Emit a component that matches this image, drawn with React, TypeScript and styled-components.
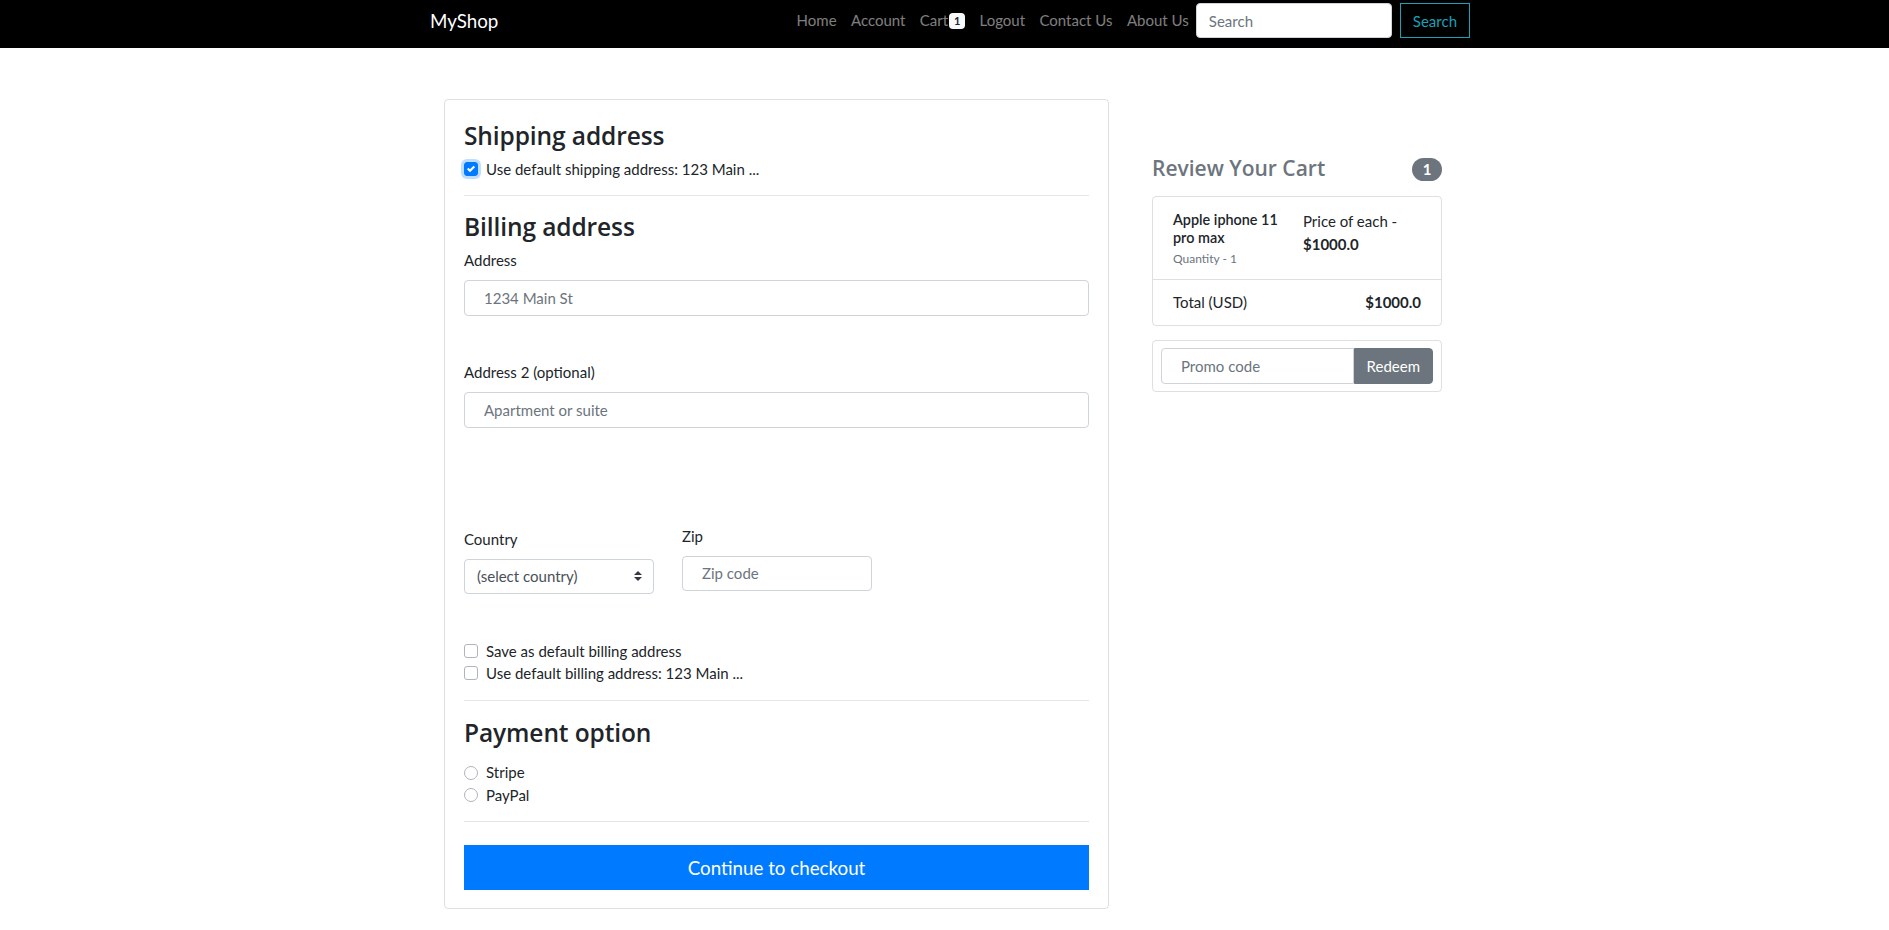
import React from 'react'
import styled, { createGlobalStyle } from 'styled-components'

const GlobalStyle = createGlobalStyle`
	* {
		box-sizing: border-box;
	}

	html,
	body {
		margin: 0;
		padding: 0;
		background: #fff;
	}

	body {
		font-family: Lato, 'Liberation Sans', sans-serif;
		font-size: 15px;
		line-height: 1.5;
		color: #212529;
	}

	input,
	button {
		font-family: inherit;
	}
`

// navbar

const Navbar = styled.nav`
	background: #000;
	height: 48px;
	padding: 3px 0 10px 11px;
`

const NavInner = styled.div`
	width: 1040px;
	height: 35px;
	margin: 0 auto;
	display: flex;
	align-items: center;
	justify-content: space-between;
`

const Brand = styled.a`
	color: #fff;
	font-size: 18.75px;
	line-height: 1;
	text-decoration: none;
	padding-top: 2px;
`

const NavGroup = styled.div`
	display: flex;
	align-items: center;
	height: 100%;
`

const NavLink = styled.a`
	display: flex;
	align-items: center;
	padding: 0 7.2px;
	color: rgba(255, 255, 255, 0.5);
	font-size: 15px;
	text-decoration: none;
`

const CartBadge = styled.span`
	display: inline-flex;
	align-items: center;
	justify-content: center;
	width: 16px;
	height: 16px;
	margin-left: 1px;
	border-radius: 4px;
	background: #f8f9fa;
	color: #212529;
	font-size: 11px;
	font-weight: 700;
	line-height: 1;
`

const SearchInput = styled.input`
	width: 196px;
	height: 35px;
	margin-left: 0;
	padding: 0 12px;
	border: 1px solid #ced4da;
	border-radius: 4px;
	font-size: 15px;
	color: #495057;
	outline: none;

	&::placeholder {
		color: #6c757d;
	}
`

const SearchButton = styled.button`
	height: 35px;
	margin-left: 8px;
	padding: 0 12px;
	border: 1px solid #17a2b8;
	border-radius: 0;
	background: transparent;
	color: #17a2b8;
	font-size: 15px;
`

// page

const Main = styled.main`
	display: flex;
	justify-content: center;
	padding: 51px 3px 0 0;
`

const Layout = styled.div`
	display: flex;
	align-items: flex-start;
	gap: 43px;
`

const Card = styled.section`
	width: 665px;
	padding: 22px 19px 18px;
	border: 1px solid rgba(0, 0, 0, 0.125);
	border-radius: 4px;
`

const SectionTitle = styled.h4<{ $mb?: number }>`
	margin: 0 0 ${(p) => p.$mb ?? 7}px;
	font-family: 'Open Sans', Lato, sans-serif;
	font-size: 24.5px;
	font-weight: 600;
	line-height: 28.8px;
	letter-spacing: -0.1px;
`

const Divider = styled.hr<{ $mb?: number }>`
	height: 0;
	margin: 15px 0 ${(p) => p.$mb ?? 15}px;
	border: 0;
	border-top: 1px solid rgba(0, 0, 0, 0.1);
`

const Field = styled.div<{ $mb?: number; $pt?: number; $width?: number }>`
	width: ${(p) => (p.$width ? `${p.$width}px` : 'auto')};
	margin-bottom: ${(p) => p.$mb ?? 0}px;
	padding-top: ${(p) => p.$pt ?? 0}px;
`

const Label = styled.label<{ $mb?: number }>`
	display: block;
	margin-bottom: ${(p) => p.$mb ?? 8}px;
`

const TextInput = styled.input<{ $h?: number }>`
	display: block;
	width: 100%;
	height: ${(p) => p.$h ?? 36}px;
	padding: 0 19px;
	border: 1px solid #ced4da;
	border-radius: 4px;
	font-size: 15px;
	color: #495057;
	outline: none;

	&::placeholder {
		color: #6c757d;
	}
`

const SelectBox = styled.div`
	display: flex;
	align-items: center;
	justify-content: space-between;
	height: 35px;
	padding: 0 11px 0 12px;
	border: 1px solid #ced4da;
	border-radius: 4px;
	color: #495057;
	cursor: pointer;
`

const FieldRow = styled.div`
	display: flex;
	align-items: flex-start;
	gap: 28px;
	margin-bottom: 46px;
`

const CheckRow = styled.label`
	display: flex;
	align-items: center;
	gap: 8px;
	line-height: 22.5px;
`

const Box = styled.span<{ $checked?: boolean; $round?: boolean }>`
	flex: none;
	display: flex;
	align-items: center;
	justify-content: center;
	width: 14px;
	height: 14px;
	border: 1px solid ${(p) => (p.$checked ? '#007bff' : '#adb5bd')};
	border-radius: ${(p) => (p.$round ? '50%' : '3px')};
	background: ${(p) => (p.$checked ? '#007bff' : '#fff')};
	box-shadow: ${(p) => (p.$checked ? '0 0 0 3px rgba(0, 123, 255, 0.25)' : 'none')};
`

const Options = styled.div`
	display: flex;
	flex-direction: column;
`

const CheckoutButton = styled.button`
	display: block;
	width: 100%;
	height: 45px;
	border: 0;
	border-radius: 0;
	background: #007bff;
	color: #fff;
	font-size: 18.75px;
`

// cart

const Aside = styled.aside`
	width: 290px;
	margin-top: 57px;
`

const CartHeading = styled.h4`
	display: flex;
	align-items: flex-end;
	justify-content: space-between;
	margin: 0 0 15px;
	color: #6c757d;
	font-family: 'Open Sans', Lato, sans-serif;
	font-size: 21px;
	font-weight: 600;
	line-height: 1.2;
`

const CountPill = styled.span`
	display: flex;
	align-items: center;
	justify-content: center;
	width: 30px;
	height: 23px;
	border-radius: 12px;
	background: #6c757d;
	color: #fff;
	font-family: Lato, sans-serif;
	font-size: 15px;
	font-weight: 700;
	line-height: 1;
`

const ListCard = styled.div`
	border: 1px solid rgba(0, 0, 0, 0.125);
	border-radius: 4px;
`

const ListItem = styled.div<{ $pad: string; $spread?: boolean }>`
	display: flex;
	align-items: flex-start;
	justify-content: ${(p) => (p.$spread ? 'space-between' : 'flex-start')};
	gap: 12px;
	padding: ${(p) => p.$pad};

	& + & {
		border-top: 1px solid rgba(0, 0, 0, 0.125);
	}
`

const ItemInfo = styled.div`
	width: 118px;
	padding-top: 2px;
`

const ItemName = styled.h6`
	margin: 0 0 3px;
	font-size: 14.4px;
	font-weight: 600;
	line-height: 1.25;
`

const Muted = styled.small`
	display: block;
	color: #6c757d;
	font-size: 12px;
	line-height: 18px;
`

const Price = styled.div`
	padding-top: 1px;

	strong {
		display: block;
		font-weight: 700;
	}
`

const PromoCard = styled.div`
	margin-top: 14px;
	padding: 7px 8px;
	border: 1px solid rgba(0, 0, 0, 0.125);
	border-radius: 4px;
`

const InputGroup = styled.div`
	display: flex;
	height: 36px;
`

const PromoInput = styled.input`
	flex: 1;
	min-width: 0;
	padding: 0 19px;
	border: 1px solid #ced4da;
	border-radius: 4px 0 0 4px;
	font-size: 15px;
	color: #495057;
	outline: none;

	&::placeholder {
		color: #6c757d;
	}
`

const RedeemButton = styled.button`
	padding: 0 12px;
	border: 1px solid #6c757d;
	border-radius: 0 4px 4px 0;
	background: #6c757d;
	color: #fff;
	font-size: 15px;
`

const Check = ({ checked, round, children }: any) => (
	<CheckRow>
		<Box $checked={checked} $round={round}>
			{checked ? (
				<svg width="8" height="8" viewBox="0 0 8 8">
					<path fill="#fff" d="M6.564.75l-3.59 3.612-1.538-1.55L0 4.26l2.974 2.99L8 2.193z" />
				</svg>
			) : null}
		</Box>
		<span>{children}</span>
	</CheckRow>
)

const Caret = () => (
	<svg width="8" height="10" viewBox="0 0 4 5">
		<path fill="#343a40" d="M2 0L0 2h4zm0 5L0 3h4z" />
	</svg>
)

export default function App() {
	return (
		<>
			<GlobalStyle />
			<Navbar>
				<NavInner>
					<Brand href="#">MyShop</Brand>
					<NavGroup>
						<NavLink href="#">Home</NavLink>
						<NavLink href="#">Account</NavLink>
						<NavLink href="#">
							Cart<CartBadge>1</CartBadge>
						</NavLink>
						<NavLink href="#">Logout</NavLink>
						<NavLink href="#">Contact Us</NavLink>
						<NavLink href="#">About Us</NavLink>
						<SearchInput placeholder="Search" />
						<SearchButton>Search</SearchButton>
					</NavGroup>
				</NavInner>
			</Navbar>

			<Main>
				<Layout>
					<Card>
						<SectionTitle>Shipping address</SectionTitle>
						<Check checked>Use default shipping address: 123 Main ...</Check>
						<Divider $mb={17} />

						<SectionTitle>Billing address</SectionTitle>
						<Field $mb={45}>
							<Label $mb={8}>Address</Label>
							<TextInput placeholder="1234 Main St" />
						</Field>
						<Field $mb={97}>
							<Label $mb={9}>Address 2 (optional)</Label>
							<TextInput placeholder="Apartment or suite" />
						</Field>
						<FieldRow>
							<Field $width={190} $pt={3}>
								<Label>Country</Label>
								<SelectBox>
									<span>(select country)</span>
									<Caret />
								</SelectBox>
							</Field>
							<Field $width={190}>
								<Label>Zip</Label>
								<TextInput $h={35} placeholder="Zip code" />
							</Field>
						</FieldRow>
						<Check>Save as default billing address</Check>
						<Check>Use default billing address: 123 Main ...</Check>
						<Divider $mb={18} />

						<SectionTitle $mb={14}>Payment option</SectionTitle>
						<Options>
							<Check round>Stripe</Check>
							<Check round>PayPal</Check>
						</Options>
						<Divider $mb={23} />

						<CheckoutButton>Continue to checkout</CheckoutButton>
					</Card>

					<Aside>
						<CartHeading>
							<span>Review Your Cart</span>
							<CountPill>1</CountPill>
						</CartHeading>
						<ListCard>
							<ListItem $pad="12px 20px 11px">
								<ItemInfo>
									<ItemName>Apple iphone 11 pro max</ItemName>
									<Muted>Quantity - 1</Muted>
								</ItemInfo>
								<Price>
									Price of each -<strong>$1000.0</strong>
								</Price>
							</ListItem>
							<ListItem $pad="11px 20px 11px" $spread>
								<span>Total (USD)</span>
								<strong>$1000.0</strong>
							</ListItem>
						</ListCard>
						<PromoCard>
							<InputGroup>
								<PromoInput placeholder="Promo code" />
								<RedeemButton>Redeem</RedeemButton>
							</InputGroup>
						</PromoCard>
					</Aside>
				</Layout>
			</Main>
		</>
	)
}
